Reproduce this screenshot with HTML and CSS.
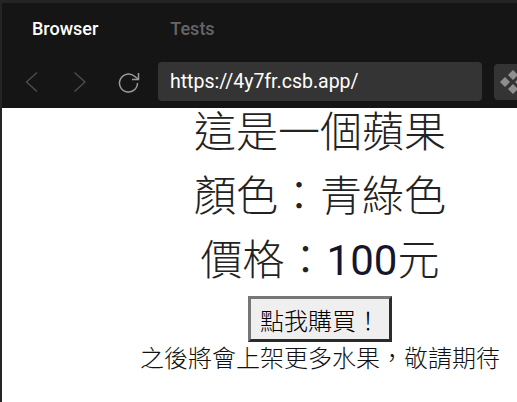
FILE: index.html
```html
<!DOCTYPE html>
<html lang="zh-Hant">
<head>
  <meta charset="UTF-8">
  <meta name="viewport" content="width=device-width, initial-scale=1.0">
  <title>Browser</title>
  <link rel="stylesheet" href="styles.css">
</head>
<body>
  <div class="frame">
    <div class="tabs">
      <span class="tab active">Browser</span>
      <span class="tab">Tests</span>
    </div>

    <div class="toolbar">
      <button class="nav-btn" aria-label="Back">
        <svg width="16" height="24" viewBox="0 0 16 24" fill="none" stroke="#4f4f4f" stroke-width="1.3"><path d="M13 2.5 2.5 12 13 21.5"/></svg>
      </button>
      <button class="nav-btn" aria-label="Forward">
        <svg width="16" height="24" viewBox="0 0 16 24" fill="none" stroke="#4f4f4f" stroke-width="1.3"><path d="M2.5 2.5 13 12 2.5 21.5"/></svg>
      </button>
      <button class="nav-btn reload" aria-label="Reload">
        <svg width="22" height="24" viewBox="0 0 22 24" fill="none" stroke="#9a9a9a" stroke-width="1.5"><path d="M19.5 13A9 9 0 1 1 16.5 6.3L20.5 9.5"/><path d="M20.5 3v6.5H14"/></svg>
      </button>
      <div class="url">https://4y7fr.csb.app/</div>
      <div class="logo-btn">
        <svg width="30" height="30" viewBox="0 0 30 30" fill="#8f8f8f"><path d="M7 10l5 5-5 5-5-5z"/><path d="M15 3l5 5-5 5-5-5z"/><path d="M15 17l5 5-5 5-5-5z"/><path d="M22 10l5 5-5 5-5-5z"/></svg>
      </div>
    </div>

    <div class="page">
      <div class="title">這是一個蘋果</div>
      <div class="title">顏色：青綠色</div>
      <div class="title">價格：<span class="num">100</span>元</div>
      <button class="buy">點我購買！</button>
      <div class="note">之後將會上架更多水果，敬請期待</div>
    </div>
  </div>
</body>
</html>
```

FILE: styles.css
```css
* {
  box-sizing: border-box;
}

html, body {
  height: 100%;
}

body {
  margin: 0;
  overflow: hidden;
  background: #242424;
  font-family: Roboto, "Noto Sans CJK TC", sans-serif;
}

.frame {
  width: 638px;
  height: 402px;
  padding: 3px 0 0 2px;
  display: flex;
  flex-direction: column;
}

.tabs {
  height: 47px;
  padding: 4px 0 0 30px;
  display: flex;
  align-items: center;
  gap: 72px;
  background: #151515;
}

.tab {
  font-size: 18px;
  font-weight: 500;
  color: #666666;
}

.tab.active {
  color: #ffffff;
}

.toolbar {
  height: 58px;
  padding: 12px 0 7px 22px;
  display: flex;
  align-items: center;
  background: #151515;
}

.nav-btn {
  width: 48px;
  height: 24px;
  padding: 0;
  flex: none;
  background: none;
  border: none;
  display: flex;
  align-items: center;
}

.reload {
  margin-left: -2px;
}

.url {
  width: 324px;
  height: 39px;
  margin-left: -8px;
  padding-left: 12px;
  flex: none;
  display: flex;
  align-items: center;
  border-radius: 4px;
  background: #343434;
  color: #ffffff;
  font-size: 19.5px;
  font-weight: 400;
}

.logo-btn {
  width: 40px;
  height: 36px;
  margin-left: 12px;
  flex: none;
  display: flex;
  align-items: center;
  padding-left: 4px;
  border-radius: 4px;
  background: #343434;
}

.page {
  flex: 1;
  display: flex;
  flex-direction: column;
  align-items: center;
  background: #ffffff;
  color: #222222;
}

.title {
  font-size: 42px;
  font-weight: 300;
  line-height: 64px;
}

.title:first-child {
  margin-top: -7px;
}

.num {
  font-weight: 400;
  color: #15152b;
}

.buy {
  margin-top: 3px;
  width: 144px;
  height: 46px;
  padding: 0;
  background: #efefef;
  border: 3px solid;
  border-color: #767676 #2b2b2b #2b2b2b #767676;
  font-family: inherit;
  font-size: 24px;
  font-weight: 300;
  color: #000000;
}

.note {
  font-size: 24px;
  font-weight: 300;
  line-height: 34px;
  color: #111111;
}
```
